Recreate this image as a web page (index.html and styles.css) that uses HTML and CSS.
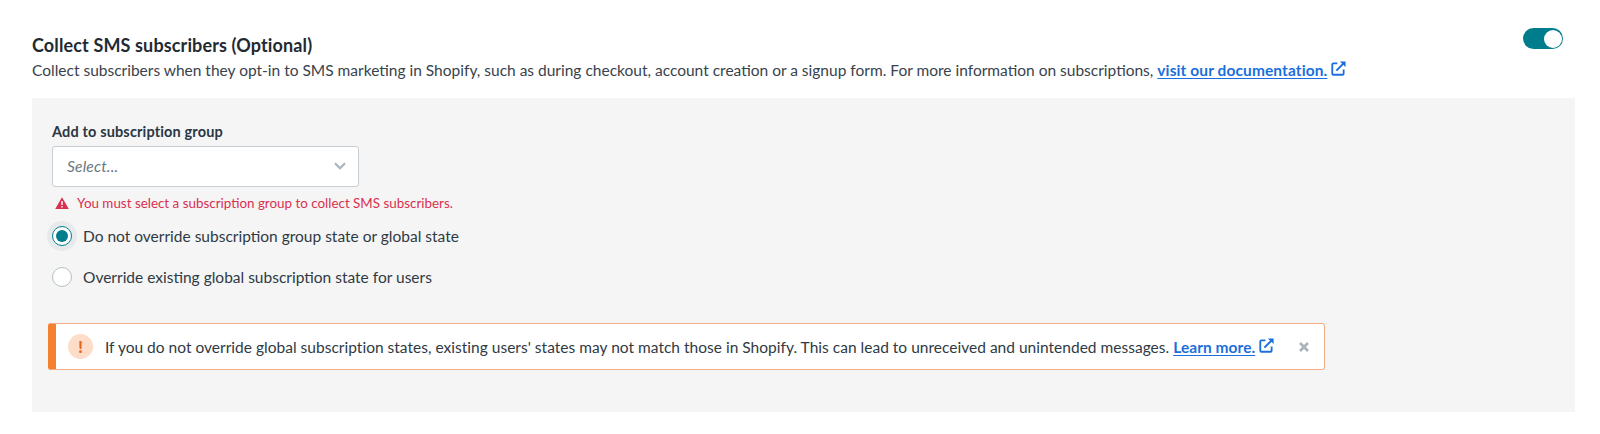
FILE: index.html
```html
<!DOCTYPE html>
<html lang="en">
<head>
<meta charset="utf-8">
<title>Collect SMS subscribers</title>
<link rel="stylesheet" href="styles.css">
</head>
<body>
<main class="section">
  <header class="head">
    <div class="head-text">
      <h2 class="title">Collect SMS subscribers (Optional)</h2>
      <p class="desc">Collect subscribers when they opt-in to SMS marketing in Shopify, such as during checkout, account creation or a signup form. For more information on subscriptions, <a class="link" href="#">visit our documentation.</a><svg class="ext" viewBox="0 0 14 14"><path d="M6 2.2H2.2a1 1 0 0 0-1 1v8.6a1 1 0 0 0 1 1h8.6a1 1 0 0 0 1-1V8" fill="none" stroke="currentColor" stroke-width="1.7"/><path d="M5 9 12 2" fill="none" stroke="currentColor" stroke-width="1.9"/><path d="M8.3 .4h5.3v5.3z" fill="currentColor"/></svg></p>
    </div>
    <span class="toggle"><span class="knob"></span></span>
  </header>
  <section class="panel">
    <div class="label">Add to subscription group</div>
    <div class="select">
      <span class="placeholder">Select...</span>
      <svg class="chev" viewBox="0 0 12 8"><path d="M1 1.2 6 6.2 11 1.2" fill="none" stroke="currentColor" stroke-width="2.2"/></svg>
    </div>
    <div class="error">
      <svg class="warn" viewBox="0 0 14 12"><path d="M7 .3 13.8 12H.2z" fill="#d9304f"/><path d="M6.3 4h1.4v4H6.3zM6.3 9h1.4v1.4H6.3z" fill="#fff"/></svg>
      <span>You must select a subscription group to collect SMS subscribers.</span>
    </div>
    <div class="radio-row first">
      <span class="radio on"><span class="dot"></span></span>
      <span>Do not override subscription group state or global state</span>
    </div>
    <div class="radio-row">
      <span class="radio"></span>
      <span>Override existing global subscription state for users</span>
    </div>
    <div class="alert">
      <span class="alert-icon">!</span>
      <p class="alert-text">If you do not override global subscription states, existing users' states may not match those in Shopify. This can lead to unreceived and unintended messages. <a class="link short" href="#">Learn more.</a><svg class="ext" viewBox="0 0 14 14"><path d="M6 2.2H2.2a1 1 0 0 0-1 1v8.6a1 1 0 0 0 1 1h8.6a1 1 0 0 0 1-1V8" fill="none" stroke="currentColor" stroke-width="1.7"/><path d="M5 9 12 2" fill="none" stroke="currentColor" stroke-width="1.9"/><path d="M8.3 .4h5.3v5.3z" fill="currentColor"/></svg></p>
      <svg class="close" viewBox="0 0 10 10"><path d="M1 1 9 9M9 1 1 9" fill="none" stroke="currentColor" stroke-width="2.7"/></svg>
    </div>
  </section>
</main>
</body>
</html>
```
FILE: styles.css
```css
* { box-sizing: border-box; }
html, body { margin: 0; background: #fff; }
body { font-family: Lato, "Open Sans", sans-serif; color: #2f3a44; height: 434px; overflow: hidden; }
.section { padding: 35px 37px 0 32px; }
.head { display: flex; justify-content: space-between; align-items: flex-start; }
.title { margin: 0; font-size: 18px; line-height: 20px; font-weight: 700; color: #1f2a33; letter-spacing: .13px; }
.desc { margin: 5px 0 0; font-size: 15.5px; line-height: 20px; color: #38434d; white-space: nowrap; }
.link { color: #1b6fdc; font-weight: 700; letter-spacing: .1px; text-decoration: underline; text-underline-offset: 2px; text-decoration-thickness: 1px; }
.ext { width: 15px; height: 15px; margin-left: 4px; color: #1b6fdc; vertical-align: 0; }
.toggle { display: flex; justify-content: flex-end; align-items: center; width: 40px; height: 21px; margin-top: -7px; padding: 0 1.5px; border-radius: 11px; background: #007d8c; }
.knob { width: 18px; height: 18px; border-radius: 50%; background: #fff; }
.panel { margin-top: 18px; margin-right: -12px; height: 314px; padding: 25px 20px 0; background: #f5f5f5; }
.label { font-size: 14.5px; line-height: 18px; font-weight: 700; color: #2a3743; letter-spacing: .15px; }
.select { display: flex; justify-content: space-between; align-items: center; width: 307px; height: 41px; margin-top: 5px; padding: 0 12px 2px 14px; background: #fff; border: 1px solid #c7cfd4; border-radius: 3px; }
.placeholder { font-size: 15.5px; font-style: italic; color: #6b7781; letter-spacing: .2px; }
.chev { width: 12px; height: 8px; color: #aab4ba; }
.error { display: flex; align-items: center; gap: 8px; margin-top: 8px; padding-left: 3px; height: 16px; font-size: 13.4px; color: #d9304f; }
.warn { width: 14px; height: 12px; flex: none; }
.radio-row { display: flex; align-items: center; gap: 11px; height: 20px; margin-top: 21px; font-size: 15.5px; color: #2f3a44; }
.radio-row.first { margin-top: 15px; }
.radio { display: flex; align-items: center; justify-content: center; width: 20px; height: 20px; flex: none; border: 1px solid #b5c0c7; border-radius: 50%; background: #fff; }
.radio.on { border-color: #007d8c; box-shadow: 0 0 0 5px #e7eaec; }
.dot { width: 12px; height: 12px; border-radius: 50%; background: #007d8c; }
.alert { display: flex; align-items: center; width: 1277px; height: 47px; margin-top: 36px; margin-left: -4px; padding: 0 15px 0 12px; background: #fff; border: 1px solid #f5ac85; border-left: 8px solid #f3812f; border-radius: 3px; }
.alert-icon { display: flex; align-items: center; justify-content: center; width: 25px; height: 25px; flex: none; border-radius: 50%; background: #fddcc8; color: #e8641b; font-weight: 900; font-size: 16px; }
.alert-text { margin: 0 0 0 12px; font-size: 15.5px; line-height: 20px; color: #2f3a44; white-space: nowrap; letter-spacing: .015px; }
.short { letter-spacing: .05px; }
.close { width: 10px; height: 10px; margin-left: auto; color: #a9b4ba; }
```
